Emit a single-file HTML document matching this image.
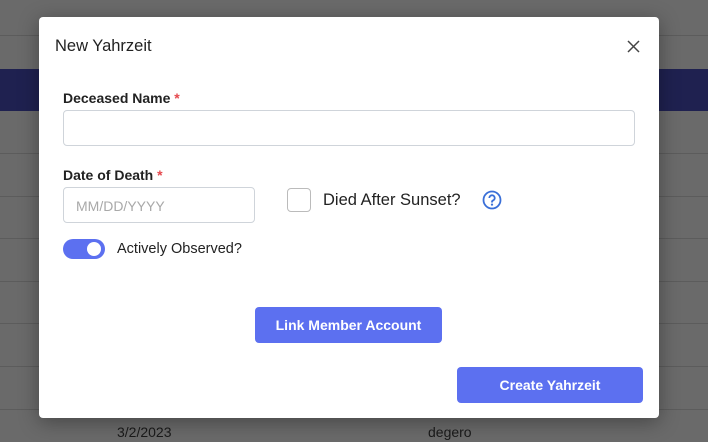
<!DOCTYPE html><html><head><style>
*{box-sizing:border-box;margin:0;padding:0}
body{width:708px;height:442px;overflow:hidden;background:#6a6a6a;font-family:"Liberation Sans",sans-serif;position:relative}
.line{position:absolute;left:0;width:708px;height:1px;background:#5c5c5c}
.band{position:absolute;left:0;top:69px;width:708px;height:42px;background:#1f2150}
.bg{position:absolute;font-size:14px;color:#1a1a1a}
.modal{position:absolute;left:39px;top:17px;width:620px;height:401px;background:#fff;border-radius:4px;box-shadow:0 4px 20px rgba(0,0,0,.35)}
.t{position:absolute;left:16px;top:20px;font-size:16.5px;color:#222}
.x{position:absolute;left:588px;top:23px}
.lbl{position:absolute;font-size:14px;font-weight:bold;color:#222}
.lbl span{color:#e5484d}
.inp{position:absolute;border:1px solid #cfd4da;border-radius:4px;background:#fff}
.btn{position:absolute;background:#5c70f0;color:#fff;font-size:14px;font-weight:bold;border-radius:4px;display:flex;align-items:center;justify-content:center}
</style></head><body>
<div class="line" style="top:35px"></div>
<div class="band"></div>
<div class="line" style="top:153px"></div><div class="line" style="top:196px"></div><div class="line" style="top:238px"></div><div class="line" style="top:281px"></div><div class="line" style="top:323px"></div><div class="line" style="top:366px"></div><div class="line" style="top:409px"></div>
<div class="bg" style="left:117px;top:424px">3/2/2023</div>
<div class="bg" style="left:428px;top:424px">degero</div>
<div class="modal">
<div class="t">New Yahrzeit</div>
<svg class="x" width="13" height="13" viewBox="0 0 13 13"><path d="M1 1L12 12M12 1L1 12" stroke="#444" stroke-width="1.5"/></svg>
<div class="lbl" style="left:24px;top:73px">Deceased Name <span>*</span></div>
<div class="inp" style="left:24px;top:93px;width:572px;height:36px"></div>
<div class="lbl" style="left:24px;top:150px">Date of Death <span>*</span></div>
<div class="inp" style="left:24px;top:170px;width:192px;height:36px;font-size:14px;color:#a9a9a9;padding:10px 12px">MM/DD/YYYY</div>
<div class="inp" style="left:248px;top:171px;width:24px;height:24px;border-color:#bbb"></div>
<div style="position:absolute;left:284px;top:174px;font-size:16.5px;color:#222">Died After Sunset?</div>
<svg style="position:absolute;left:443px;top:173px" width="20" height="20" viewBox="0 0 20 20"><circle cx="10" cy="10" r="8.5" fill="none" stroke="#3a6fd8" stroke-width="1.8"/><path d="M7.3 8a2.7 2.7 0 1 1 3.7 2.5c-.8.3-1 .8-1 1.6v.4" fill="none" stroke="#3a6fd8" stroke-width="1.8"/><circle cx="10" cy="14.6" r="1.1" fill="#3a6fd8"/></svg>
<div style="position:absolute;left:24px;top:222px;width:42px;height:20px;border-radius:10px;background:#5c70f0"><div style="position:absolute;right:4px;top:3px;width:14px;height:14px;border-radius:50%;background:#fff"></div></div>
<div style="position:absolute;left:78px;top:224px;font-size:14.5px;color:#222">Actively Observed?</div>
<div class="btn" style="left:216px;top:290px;width:187px;height:36px">Link Member Account</div>
<div class="btn" style="left:418px;top:350px;width:186px;height:36px">Create Yahrzeit</div>
</div>
</body></html>
